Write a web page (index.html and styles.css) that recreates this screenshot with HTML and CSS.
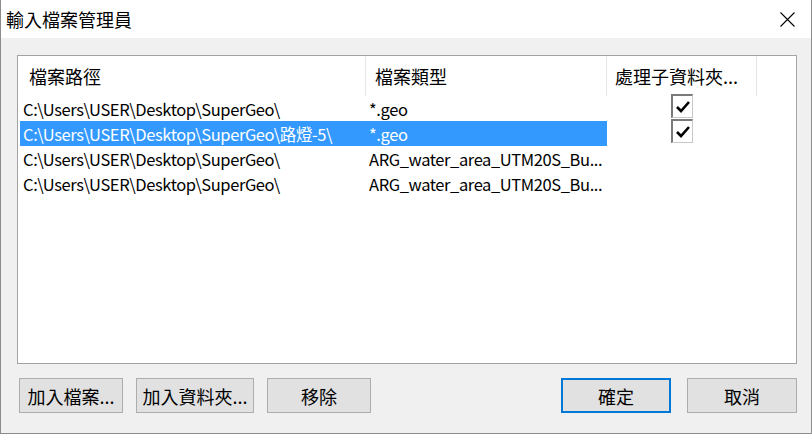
FILE: index.html
```html
<!DOCTYPE html>
<html lang="zh-Hant">
<head>
<meta charset="utf-8">
<title>輸入檔案管理員</title>
<link rel="stylesheet" href="styles.css">
</head>
<body>
<div class="window">
  <div class="titlebar">
    <span class="title">輸入檔案管理員</span>
    <svg class="close" width="15" height="15" viewBox="0 0 15 15"><path d="M0.5 0.5 L14.5 14.5 M14.5 0.5 L0.5 14.5" stroke="#000" stroke-width="1.1" fill="none"/></svg>
  </div>
  <div class="content">
    <div class="list">
      <div class="header">
        <div class="hcell h1">檔案路徑</div>
        <div class="hcell h2">檔案類型</div>
        <div class="hcell h3">處理子資料夾...</div>
        <div class="hcell h4"></div>
      </div>
      <div class="rows">
        <div class="row">
          <div class="cell c1">C:\Users\USER\Desktop\SuperGeo\</div>
          <div class="cell c2">*.geo</div>
          <div class="cell c3"><span class="check"><svg width="16" height="14" viewBox="0 0 16 14"><path d="M2 7 L6 11 L14 2" stroke="#000" stroke-width="2.6" fill="none"/></svg></span></div>
        </div>
        <div class="row sel">
          <div class="cell c1">C:\Users\USER\Desktop\SuperGeo\路燈-5\</div>
          <div class="cell c2">*.geo</div>
          <div class="cell c3"><span class="check"><svg width="16" height="14" viewBox="0 0 16 14"><path d="M2 7 L6 11 L14 2" stroke="#000" stroke-width="2.6" fill="none"/></svg></span></div>
        </div>
        <div class="row">
          <div class="cell c1">C:\Users\USER\Desktop\SuperGeo\</div>
          <div class="cell c2">ARG_water_area_UTM20S_Bu...</div>
          <div class="cell c3"></div>
        </div>
        <div class="row">
          <div class="cell c1">C:\Users\USER\Desktop\SuperGeo\</div>
          <div class="cell c2">ARG_water_area_UTM20S_Bu...</div>
          <div class="cell c3"></div>
        </div>
      </div>
    </div>
    <div class="buttons">
      <div class="group left">
        <div class="btn w104">加入檔案...</div>
        <div class="btn w118">加入資料夾...</div>
        <div class="btn w104">移除</div>
      </div>
      <div class="group right">
        <div class="btn w110 default">確定</div>
        <div class="btn w110">取消</div>
      </div>
    </div>
  </div>
</div>
</body>
</html>
```

FILE: styles.css
```css
html, body {
  margin: 0;
  padding: 0;
  background: #f0f0f0;
}
body {
  font-family: "Noto Sans CJK TC", sans-serif;
  font-size: 18px;
  color: #000;
}
.window {
  width: 812px;
  height: 434px;
  box-sizing: border-box;
  border: 1px solid #8c8c8c;
  border-top: none;
  background: #f0f0f0;
  display: flex;
  flex-direction: column;
}
.titlebar {
  height: 38px;
  flex: none;
  background: #fff;
  display: flex;
  align-items: center;
  justify-content: space-between;
  padding: 0 16px 0 5px;
}
.title {
  font-size: 18px;
  line-height: 1;
}
.close {
  display: block;
}
.content {
  flex: 1;
  display: flex;
  flex-direction: column;
  padding: 17px 14px 20px 16px;
}
.list {
  height: 309px;
  box-sizing: border-box;
  border: 1px solid #a3a3a3;
  background: #fff;
  flex: none;
}
.header {
  display: grid;
  grid-template-columns: 348px 241px 150px 1fr;
  height: 40px;
}
.hcell {
  box-sizing: border-box;
  border-right: 1px solid #e5e5e5;
  display: flex;
  align-items: center;
  white-space: nowrap;
  overflow: hidden;
}
.h1 { padding-left: 11px; }
.h2 { padding-left: 9px; }
.h3 { padding-left: 8px; }
.h4 { border-right: none; }
.rows {
  padding-left: 2px;
}
.row {
  display: grid;
  grid-template-columns: 346px 241px 150px;
  height: 25px;
}
.cell {
  display: flex;
  align-items: center;
  padding-left: 3px;
  white-space: nowrap;
  overflow: hidden;
  font-size: 16.5px;
  letter-spacing: -0.4px;
}
.row.sel .c1, .row.sel .c2 {
  background: #3399ff;
  color: #fff;
}
.c3 {
  justify-content: center;
  padding-left: 0;
  overflow: visible;
  align-items: flex-start;
}
.check {
  width: 22px;
  height: 24px;
  margin-top: -2px;
  box-sizing: border-box;
  border-style: solid;
  border-width: 2px 1px 1px 2px;
  border-color: #7a7a7a #c8c8c8 #c8c8c8 #7a7a7a;
  background: #fff;
  display: flex;
  align-items: center;
  justify-content: center;
}
.check svg { display: block; }
.buttons {
  margin-top: 14px;
  height: 35px;
  display: flex;
  justify-content: space-between;
}
.group {
  display: flex;
}
.group.left {
  gap: 13px;
  margin-left: 2px;
}
.group.right {
  gap: 16px;
}
.btn {
  height: 35px;
  box-sizing: border-box;
  border: 1px solid #adadad;
  background: #e1e1e1;
  display: flex;
  align-items: center;
  justify-content: center;
  font-size: 18px;
  white-space: nowrap;
}
.btn.default {
  border: 2px solid #0078d7;
}
.w104 { width: 104px; }
.w118 { width: 118px; }
.w110 { width: 110px; }
```
